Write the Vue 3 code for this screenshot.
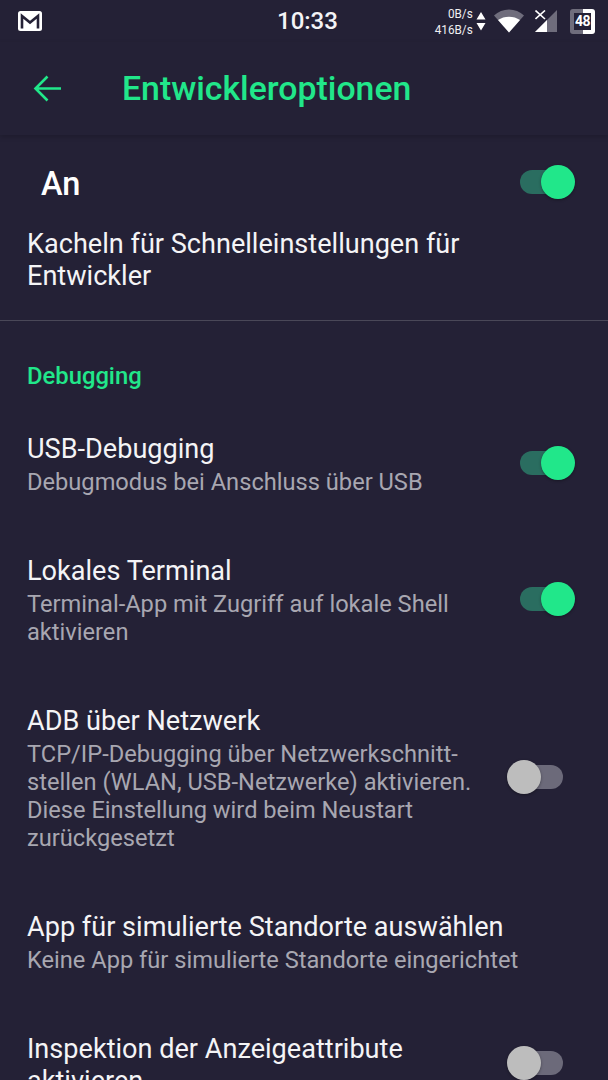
<template>
  <div class="screen">
    <div class="statusbar">
      <svg class="gmail" width="26" height="22" viewBox="0 0 26 22">
        <rect x="1" y="1" width="24" height="20" rx="2.500" fill="#fff" />
        <path d="M5 18.500V6L13 12.500L21 6V18.500" fill="none" stroke="#242136" stroke-width="2.600" />
      </svg>
      <span class="clock">10:33</span>
      <div class="status-right">
        <div class="speed">
          <span>0B/s</span>
          <span>416B/s</span>
        </div>
        <svg class="arrows" width="10" height="22" viewBox="0 0 10 22">
          <path d="M5 2L9.500 9.500H.5Z M.5 13H9.500L5 20.500Z" fill="#fff" />
        </svg>
        <svg class="wifi" width="30" height="24" viewBox="0 0 30 24">
          <path d="M0 6.500C8 -1.500 22 -1.500 30 6.500L15 23.500Z" fill="#6f6d7c" />
          <path d="M4 11C10 6.500 20 6.500 26 11L15 23.500Z" fill="#fff" />
        </svg>
        <svg class="signal" width="22" height="22" viewBox="0 0 22 22">
          <path d="M22 0V22H0Z" fill="#6f6d7c" />
          <path d="M12 10V22H0Z" fill="#fff" />
          <path d="M.5 .5L10 9M10 .5L.5 9" stroke="#fff" stroke-width="1.600" />
        </svg>
        <div class="battery">
          <span class="battery-num">48</span>
        </div>
      </div>
    </div>
    <div class="toolbar">
      <svg class="back" width="30" height="28" viewBox="0 0 30 28">
        <path d="M28 13.500H3M14.500 1.500L2.500 13.500L14.500 25.500" fill="none" stroke="#21e78a" stroke-width="2.600" />
      </svg>
      <h1>Entwickleroptionen</h1>
    </div>

    <div class="master">
      <span class="master-label">An</span>
      <div class="switch on"><div class="track"></div><div class="thumb"></div></div>
    </div>
    <div class="tiles">Kacheln für Schnelleinstellungen für Entwickler</div>
    <div class="divider"></div>

    <div class="category">Debugging</div>

    <div v-for="item in items" :key="item.title" class="row" :class="item.cls">
      <div class="row-text">
        <div class="row-title">{{ item.title }}</div>
        <div v-if="item.sub" class="row-sub" v-html="item.sub"></div>
      </div>
      <div v-if="item.toggle" class="switch" :class="item.toggle">
        <div class="track"></div>
        <div class="thumb"></div>
      </div>
    </div>
  </div>
</template>

<script setup>
const items = [
  { title: 'USB-Debugging', sub: 'Debugmodus bei Anschluss über USB', toggle: 'on', cls: 'r-usb' },
  { title: 'Lokales Terminal', sub: 'Terminal-App mit Zugriff auf lokale Shell aktivieren', toggle: 'on', cls: 'r-term' },
  {
    title: 'ADB über Netzwerk',
    sub: 'TCP/IP-Debugging über Netzwerkschnitt-<br>stellen (WLAN, USB-Netzwerke) aktivieren.<br>Diese Einstellung wird beim Neustart<br>zurückgesetzt',
    toggle: 'off',
    cls: 'r-adb'
  },
  { title: 'App für simulierte Standorte auswählen', sub: 'Keine App für simulierte Standorte eingerichtet', cls: 'r-app' },
  { title: 'Inspektion der Anzeigeattribute aktivieren', toggle: 'off', cls: 'r-insp' }
]
</script>

<style>
html,
body {
  margin: 0;
  background: #242136;
  overflow: hidden;
}
</style>

<style scoped>
.screen {
  width: 608px;
  height: 1080px;
  overflow: hidden;
  background: #242136;
  font-family: Roboto, "Noto Sans", sans-serif;
  color: #fff;
}

.statusbar {
  height: 42px;
  display: flex;
  align-items: center;
  position: relative;
  padding: 0 13px 0 17px;
}

.clock {
  position: absolute;
  left: 277px;
  top: 7px;
  font-size: 24px;
  line-height: 28px;
  font-weight: 500;
  color: #f4f4f6;
}

.status-right {
  margin-left: auto;
  display: flex;
  align-items: center;
}

.speed {
  display: flex;
  flex-direction: column;
  align-items: flex-end;
  font-size: 13.500px;
  line-height: 16px;
  color: #f0f0f2;
  transform: translateX(1px) scaleX(0.87);
  transform-origin: right center;
}

.arrows {
  margin-left: 4px;
}

.wifi {
  margin-left: 8px;
}

.signal {
  margin-left: 11px;
  margin-top: 0;
}

.battery {
  margin-left: 13px;
  width: 25px;
  height: 25px;
  border-radius: 3px;
  background: linear-gradient(to right, #6f6d7c 50%, #fff 50%);
  display: flex;
  align-items: center;
  justify-content: center;
}

.battery-num {
  width: 17px;
  height: 17px;
  background: #242136;
  font-size: 14px;
  line-height: 17px;
  font-weight: 700;
  text-align: center;
  color: #fff;
  letter-spacing: -0.5px;
}

.toolbar {
  height: 93px;
  display: flex;
  align-items: center;
  padding-left: 33px;
  box-sizing: border-box;
  box-shadow: 0 2px 5px rgba(0, 0, 0, 0.18);
}

.back {
  flex: none;
}

h1 {
  margin: 0 0 0 59px;
  font-size: 33.800px;
  line-height: 40px;
  font-weight: 500;
  color: #21e78a;
}

.master {
  height: 98px;
  display: flex;
  align-items: center;
  padding-left: 41px;
}

.master-label {
  font-size: 32.500px;
  font-weight: 500;
}

.tiles {
  padding: 0 120px 0 27px;
  font-size: 27.100px;
  line-height: 32px;
  margin-top: -5px;
  height: 69px;
  color: #f4f4f6;
}

.divider {
  height: 1px;
  background: #4a4858;
  margin-top: 23px;
}

.category {
  margin: 41px 27px 0;
  font-size: 23.800px;
  line-height: 28px;
  font-weight: 500;
  color: #21e78a;
}

.row {
  display: flex;
  align-items: center;
  padding-left: 27px;
  position: relative;
}

.row-text {
  flex: 1;
  min-width: 0;
  padding-right: 120px;
}

.row-title {
  font-size: 27.100px;
  line-height: 32px;
  color: #f4f4f6;
}

.row-sub {
  font-size: 23.650px;
  line-height: 28px;
  color: #a8a7b1;
  margin-top: 3px;
}

.r-usb {
  margin-top: 43px;
}

.r-term {
  margin-top: 59px;
}

.r-adb {
  margin-top: 59px;
}

.r-adb .row-text {
  padding-right: 0;
  white-space: nowrap;
}

.r-app {
  margin-top: 59px;
}

.r-app .row-text {
  padding-right: 0;
}

.r-insp {
  margin-top: 59px;
}

.switch {
  position: absolute;
  width: 68px;
  height: 34px;
  left: 507px;
  top: 50%;
  margin-top: -19px;
}

.master .switch {
  top: 165px;
  margin-top: 0;
}

.track {
  position: absolute;
  left: 13px;
  top: 5px;
  width: 43px;
  height: 24px;
  border-radius: 12px;
  background: #6c6a7a;
}

.thumb {
  position: absolute;
  top: 0;
  left: 0;
  width: 34px;
  height: 34px;
  border-radius: 50%;
  background: #bdbdbd;
  box-shadow: 0 1px 3px rgba(0, 0, 0, 0.35);
}

.switch.on .track {
  background: #2a6d60;
}

.switch.on .thumb {
  left: 34px;
  background: #21e78a;
}
</style>
